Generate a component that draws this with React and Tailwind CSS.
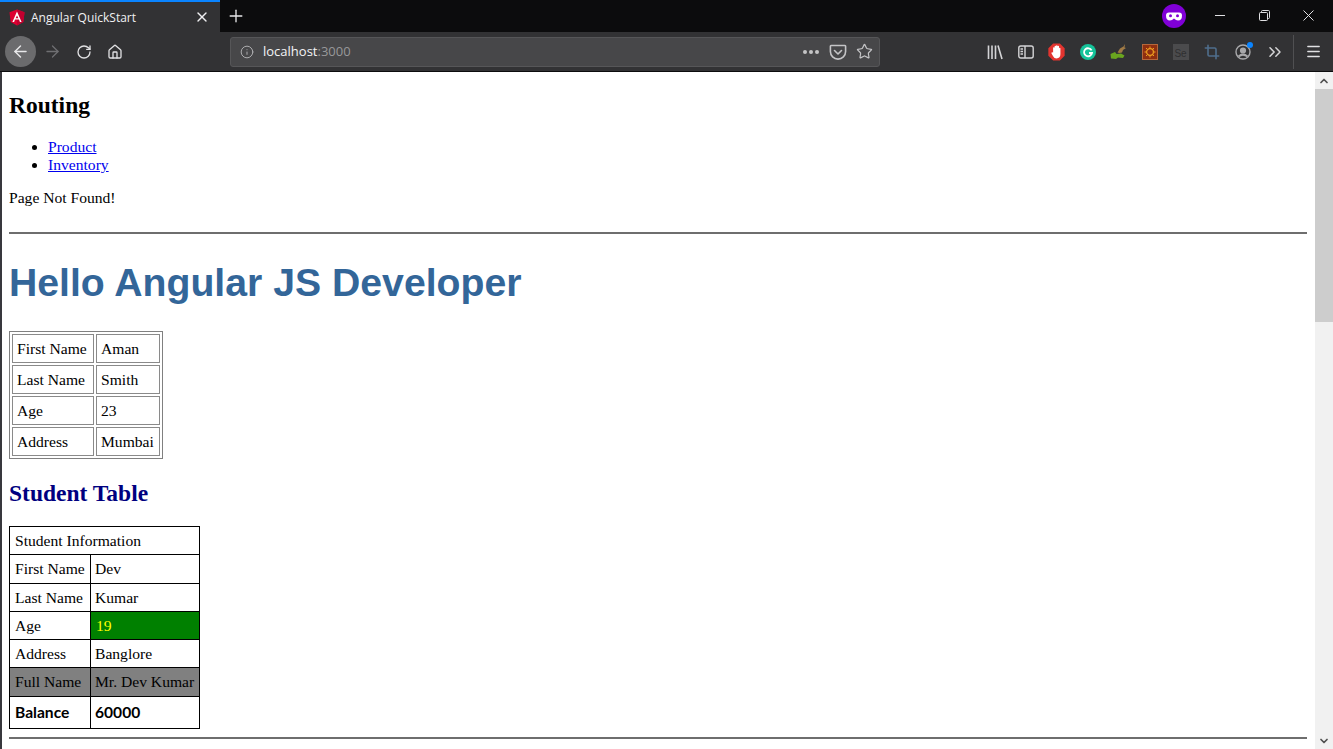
import { ArrowLeft, ArrowRight, ChevronsRight, ChevronUp, ChevronDown, Crop, Home, Info, Menu, Plus, RotateCw, Star, X } from "lucide-react";

const plainRows = [
    ["First Name", "Aman"],
    ["Last Name", "Smith"],
    ["Age", "23"],
    ["Address", "Mumbai"],
];

function AngularLogo() {
    return (
        <svg width="16" height="17" viewBox="0 0 16 17">
            <path d="M8 0.5 L15.5 3.2 L14.3 13 L8 16.5 L1.7 13 L0.5 3.2 Z" fill="#dd0031" />
            <path d="M8 0.5 L15.5 3.2 L14.3 13 L8 16.5 Z" fill="#c3002f" />
            <path d="M8 2.6 L3.4 12.9 H5.1 L6 10.6 H10 L10.9 12.9 H12.6 Z M8 6.4 L9.4 9.3 H6.6 Z" fill="#fff" />
        </svg>
    );
}

function Pocket() {
    return (
        <svg width="18" height="18" viewBox="0 0 18 18" fill="none" stroke="#c4c4c6" strokeWidth="1.6" strokeLinecap="round" strokeLinejoin="round">
            <path d="M2 2.5 H16 Q16.6 2.5 16.6 3.2 V8.5 A7.6 7.6 0 0 1 1.4 8.5 V3.2 Q1.4 2.5 2 2.5 Z" />
            <path d="M5.5 7.5 L9 11 L12.5 7.5" />
        </svg>
    );
}

function Library() {
    return (
        <svg width="16" height="16" viewBox="0 0 16 16" fill="none" stroke="#d4d4d6" strokeWidth="1.6">
            <path d="M1.5 1.5 V15 M5 1.5 V15 M8.5 1.5 V15 M11 1.5 L15 15" />
        </svg>
    );
}

function Sidebar() {
    return (
        <svg width="16" height="16" viewBox="0 0 16 16" fill="none" stroke="#d4d4d6" strokeWidth="1.4">
            <rect x="0.8" y="2" width="14.4" height="12" rx="2" />
            <path d="M7 2 V14 M2.5 5 H5 M2.5 7.5 H5 M2.5 10 H5" />
        </svg>
    );
}

function StopHand() {
    return (
        <svg width="17" height="18" viewBox="0 0 16 17">
            <path d="M4.8 0.5 H11.2 L15.7 5 V12 L11.2 16.5 H4.8 L0.3 12 V5 Z" fill="#e2342f" />
            <path d="M4.8 8.5 V4.6 a0.7 0.7 0 0 1 1.4 0 V3.2 a0.7 0.7 0 0 1 1.4 0 V2.8 a0.7 0.7 0 0 1 1.4 0 V3.4 a0.7 0.7 0 0 1 1.4 0 V5 a0.7 0.7 0 0 1 1.3 0 V10.5 Q11.7 14.6 8 14.6 Q5.8 14.6 4.8 12.5 L3.2 9.6 Q3.2 8.2 4.8 9 Z" fill="#fff" />
        </svg>
    );
}

function Grammarly() {
    return (
        <svg width="16" height="16" viewBox="0 0 16 16">
            <circle cx="8" cy="8" r="8" fill="#15c39a" />
            <path d="M11.6 6.4 A4 4 0 1 0 12 9 H9" fill="none" stroke="#fff" strokeWidth="1.8" />
        </svg>
    );
}

function Bird() {
    return (
        <svg width="17" height="17" viewBox="0 0 17 17">
            <path d="M0.5 11 L5 9 L6.5 11 L11 10.5 L14.5 12.5 L13 15 L8 14.5 L6 16 L1 15.5 Z" fill="#6aa51f" />
            <path d="M7.5 9.5 L10 5.5 L13.5 3.5 L15 1 L14.5 4.5 L16 5 L13 7 L12 9.5 L9.5 10 Z" fill="#a07a45" />
        </svg>
    );
}

function OrangeBox() {
    return (
        <svg width="16" height="16" viewBox="0 0 16 16">
            <rect x="0.5" y="0.5" width="15" height="15" fill="#8f2f10" stroke="#b6673a" />
            <circle cx="8" cy="8" r="3.4" fill="none" stroke="#f0a020" strokeWidth="1.2" />
            <path d="M8 2.5 V4 M8 12 V13.5 M2.5 8 H4 M12 8 H13.5 M4 4 L5 5 M12 4 L11 5 M4 12 L5 11 M12 12 L11 11" stroke="#f0a020" strokeWidth="1" />
        </svg>
    );
}

function SelenBox() {
    return (
        <div className="w-4 h-4 bg-[#4b4b4d] flex items-end justify-center overflow-hidden">
            <span className="text-[10px] leading-[12px] text-[#2f2f31] font-['Liberation_Sans',sans-serif]">Se</span>
        </div>
    );
}

function Profile() {
    return (
        <div className="relative w-4 h-4 ml-[1px]">
            <svg width="16" height="16" viewBox="0 0 16 16" fill="none" stroke="#a8a8aa" strokeWidth="1.4">
                <circle cx="8" cy="8" r="7" />
                <circle cx="8" cy="6.5" r="2.4" fill="#a8a8aa" />
                <path d="M3.5 12.5 Q8 8.8 12.5 12.5" strokeWidth="2" />
            </svg>
            <div className="absolute -top-[2px] -right-[2px] w-[6px] h-[6px] rounded-full bg-[#0a84ff]" />
        </div>
    );
}

function ToolButton({ children }) {
    return <div className="w-[31px] h-full flex items-center justify-center">{children}</div>;
}

function BrowserChrome() {
    return (
        <div className="shrink-0 font-['Open_Sans',sans-serif]">
            {/* barra de pestañas */}
            <div className="h-8 bg-[#0c0c0d] flex items-stretch">
                <div className="w-[220px] bg-[#323234] border-t-2 border-[#0a84ff] flex items-center pl-[9px] pr-[10px]">
                    <AngularLogo />
                    <span className="ml-[6px] pt-[1px] text-[12px] text-[#f0f0f2] flex-1">Angular QuickStart</span>
                    <X size={16} strokeWidth={2} color="#f0f0f2" />
                </div>
                <div className="w-[32px] flex items-center justify-center">
                    <Plus size={20} strokeWidth={1.6} color="#e8e8ea" />
                </div>
                <div className="flex-1" />
                <div className="w-6 h-6 mt-1 rounded-full bg-[#8000d7] flex items-center justify-center">
                    <svg width="16" height="9" viewBox="0 0 16 9">
                        <path d="M3 0.5 H13 Q16 0.5 16 3.5 Q16 8.5 12 8.5 Q10 8.5 8 6.5 Q6 8.5 4 8.5 Q0 8.5 0 3.5 Q0 0.5 3 0.5 Z" fill="#fff" />
                        <circle cx="4.5" cy="3.8" r="1.5" fill="#8000d7" />
                        <circle cx="11.5" cy="3.8" r="1.5" fill="#8000d7" />
                    </svg>
                </div>
                <div className="w-[39px] flex items-center justify-end -mt-[1px]">
                    <div className="w-[10px] h-px bg-[#e0e0e2]" />
                </div>
                <div className="w-[45px] flex items-center justify-end -mt-[1px]">
                    <svg width="11" height="11" viewBox="0 0 11 11" fill="none" stroke="#e0e0e2">
                        <rect x="0.5" y="2.5" width="8" height="8" rx="1" />
                        <path d="M2.5 2.5 V1.5 Q2.5 0.5 3.5 0.5 H9.5 Q10.5 0.5 10.5 1.5 V7.5 Q10.5 8.5 9.5 8.5 H8.5" />
                    </svg>
                </div>
                <div className="w-[44px] flex items-center justify-end -mt-[1px]">
                    <svg width="11" height="11" viewBox="0 0 11 11" stroke="#e0e0e2">
                        <path d="M0.5 0.5 L10.5 10.5 M10.5 0.5 L0.5 10.5" />
                    </svg>
                </div>
                <div className="w-[19px]" />
            </div>

            {/* barra de navegación */}
            <div className="h-10 bg-[#323234] border-b border-[#0c0c0d] flex items-center pl-[5px]">
                <div className="w-[31px] h-[31px] rounded-full bg-[#6b6b6d] flex items-center justify-center">
                    <ArrowLeft size={19} strokeWidth={1.8} color="#e8e8ea" />
                </div>
                <div className="w-[32px] flex justify-center"><ArrowRight size={19} strokeWidth={1.6} color="#6f6f72" /></div>
                <div className="w-[32px] flex justify-center"><RotateCw size={16} strokeWidth={2} color="#e0e0e2" /></div>
                <div className="w-[30px] flex justify-center"><Home size={16} strokeWidth={2} color="#e0e0e2" /></div>
                <div className="ml-[100px] w-[650px] h-[30px] rounded-[3px] bg-[#474749] border border-[#565658] flex items-center pl-[9px] pr-[6px]">
                    <Info size={14} strokeWidth={1.6} color="#b4b4b6" />
                    <span className="ml-[9px] text-[13px] text-[#f4f4f6] flex-1">
                        localhost<span className="text-[#98989a]">:3000</span>
                    </span>
                    <div className="flex items-center gap-[2px] mr-[10px]">
                        <div className="w-[4px] h-[4px] rounded-full bg-[#c4c4c6]" />
                        <div className="w-[4px] h-[4px] rounded-full bg-[#c4c4c6]" />
                        <div className="w-[4px] h-[4px] rounded-full bg-[#c4c4c6]" />
                    </div>
                    <Pocket />
                    <div className="ml-[9px]"><Star size={17} strokeWidth={1.7} color="#c4c4c6" /></div>
                </div>
                <div className="ml-[99px] h-full flex items-center">
                    <ToolButton><Library /></ToolButton>
                    <ToolButton><Sidebar /></ToolButton>
                    <ToolButton><StopHand /></ToolButton>
                    <ToolButton><Grammarly /></ToolButton>
                    <ToolButton><Bird /></ToolButton>
                    <ToolButton><OrangeBox /></ToolButton>
                    <ToolButton><SelenBox /></ToolButton>
                    <ToolButton><div className="ml-[1px]"><Crop size={16} strokeWidth={2.4} color="#4f6e8c" /></div></ToolButton>
                    <ToolButton><Profile /></ToolButton>
                    <ToolButton><div className="ml-[3px]"><ChevronsRight size={20} strokeWidth={1.8} color="#d4d4d6" /></div></ToolButton>
                </div>
                <div className="ml-[4px] w-px h-[34px] bg-[#505052]" />
                <div className="ml-[11px]"><Menu size={17} strokeWidth={2} color="#e0e0e2" /></div>
            </div>
        </div>
    );
}

function Scrollbar() {
    return (
        <div className="w-[18px] shrink-0 bg-[#f1f1f1] flex flex-col items-center">
            <div className="h-[17px] flex items-center justify-center">
                <ChevronUp size={12} strokeWidth={3.5} color="#505050" />
            </div>
            <div className="w-full h-[233px] bg-[#cdcdcd]" />
            <div className="flex-1" />
            <div className="h-[17px] flex items-center justify-center">
                <ChevronDown size={12} strokeWidth={3.5} color="#505050" />
            </div>
        </div>
    );
}

function Page() {
    return (
        <div className="flex-1 min-w-0 border-l-2 border-[#38383d] pl-[7px] pr-2 overflow-hidden font-['Liberation_Serif',serif] text-[15.6px] text-black">
            <h2 className="mt-5 text-[23.5px] leading-[27px] font-bold">Routing</h2>
            <ul className="mt-[19px] list-disc pl-[39px] leading-[18px]">
                <li><a href="#" className="text-[#0000ee] underline">Product</a></li>
                <li><a href="#" className="text-[#0000ee] underline">Inventory</a></li>
            </ul>
            <p className="mt-[15px] leading-[18px]">Page Not Found!</p>
            <hr className="mt-[25px] border-t-0 h-[2px] bg-[#6e6e6e]" />

            <h1 className="mt-[26px] text-[39.2px] leading-[46px] font-bold text-[#336699] font-['Liberation_Sans',sans-serif]">
                Hello Angular JS Developer
            </h1>

            <table className="mt-[25px] border border-[#808080] border-separate border-spacing-[2px]">
                <tbody>
                    {plainRows.map((row) => (
                        <tr key={row[0]}>
                            <td className="w-[82px] border border-[#8a8a8a] px-1 py-[5px] leading-[17px] whitespace-nowrap">{row[0]}</td>
                            <td className="w-[64px] border border-[#8a8a8a] px-1 py-[5px] leading-[17px] whitespace-nowrap">{row[1]}</td>
                        </tr>
                    ))}
                </tbody>
            </table>

            <h2 className="mt-[21px] text-[23.5px] leading-[27px] font-bold text-[#000080]">Student Table</h2>

            <table className="mt-[19px] w-[190px] table-fixed border-collapse border border-black whitespace-nowrap">
                <colgroup>
                    <col className="w-[81px]" />
                    <col className="w-[109px]" />
                </colgroup>
                <tbody>
                    <tr>
                        <td colSpan={2} className="border border-black px-[5px] py-[4px] leading-[19.3px]">Student Information</td>
                    </tr>
                    <tr>
                        <td className="border border-black px-[5px] py-[4px] leading-[19.3px]">First Name</td>
                        <td className="border border-black px-[4px] py-[4px] leading-[19.3px]">Dev</td>
                    </tr>
                    <tr>
                        <td className="border border-black px-[5px] py-[4px] leading-[19.3px]">Last Name</td>
                        <td className="border border-black px-[4px] py-[4px] leading-[19.3px]">Kumar</td>
                    </tr>
                    <tr>
                        <td className="border border-black px-[5px] py-[4px] leading-[19.3px]">Age</td>
                        <td className="border border-black px-[5px] py-[4px] leading-[19.3px] bg-[#008000] text-[#ffff00]">19</td>
                    </tr>
                    <tr>
                        <td className="border border-black px-[5px] py-[4px] leading-[19.3px]">Address</td>
                        <td className="border border-black px-[4px] py-[4px] leading-[19.3px]">Banglore</td>
                    </tr>
                    <tr className="bg-[#808080]">
                        <td className="border border-black px-[5px] py-[4px] leading-[19.3px]">Full Name</td>
                        <td className="border border-black px-[4px] py-[4px] leading-[19.3px]">Mr. Dev Kumar</td>
                    </tr>
                    <tr className="font-['Lato',sans-serif] font-bold">
                        <td className="border border-black px-[5px] py-[7px] leading-[17px]">Balance</td>
                        <td className="border border-black px-[4px] py-[7px] leading-[17px]">60000</td>
                    </tr>
                </tbody>
            </table>
            <hr className="mt-[8px] border-t-0 h-[2px] bg-[#6e6e6e]" />
        </div>
    );
}

export default function App() {
    return (
        <div className="w-[1333px] h-[749px] overflow-hidden flex flex-col bg-white">
            <BrowserChrome />
            <div className="flex-1 min-h-0 flex">
                <Page />
                <Scrollbar />
            </div>
        </div>
    );
}
